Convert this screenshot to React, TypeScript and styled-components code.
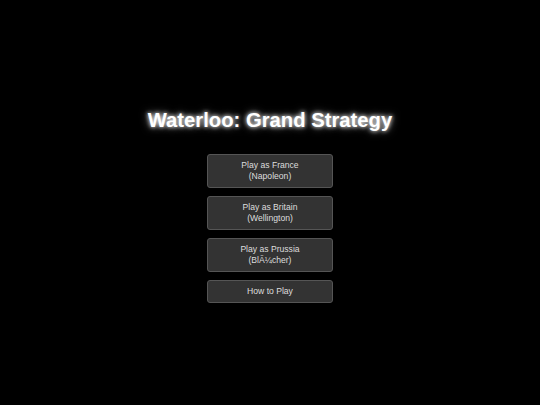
import React from "react";
import styled, { createGlobalStyle } from "styled-components";

const GlobalStyle = createGlobalStyle`
  html, body {
    margin: 0;
    padding: 0;
    background: #000;
  }
  body {
    font-family: "Liberation Sans", Arial, sans-serif;
  }
`;

const Screen = styled.div`
  box-sizing: border-box;
  width: 100vw;
  height: 100vh;
  padding-top: 6px;
  display: flex;
  flex-direction: column;
  align-items: center;
  justify-content: center;
  background: #000;
`;

const Title = styled.h1`
  margin: 0 0 22px 0;
  font-size: 20.25px;
  line-height: 23px;
  font-weight: bold;
  color: #fff;
  text-shadow: 0 0 4px #fff, 0 0 8px rgba(255, 255, 255, 0.6);
`;

const Menu = styled.div`
  display: flex;
  flex-direction: column;
  gap: 8px;
`;

const MenuButton = styled.button`
  box-sizing: border-box;
  width: 126px;
  padding: 5px 6px;
  background: #333;
  color: #ddd;
  border: 1px solid #555;
  border-radius: 3px;
  font-family: "Liberation Sans", Arial, sans-serif;
  font-size: 8.6px;
  line-height: 11px;
  cursor: pointer;
`;

const options = [
  ["Play as France", "(Napoleon)"],
  ["Play as Britain", "(Wellington)"],
  ["Play as Prussia", "(Bl\u00C3\u00BCcher)"],
];

export default function App() {
  return (
    <>
      <GlobalStyle />
      <Screen>
        <Title>Waterloo: Grand Strategy</Title>
        <Menu>
          {options.map(([a, b]) => (
            <MenuButton key={a}>
              {a}
              <br />
              {b}
            </MenuButton>
          ))}
          <MenuButton>How to Play</MenuButton>
        </Menu>
      </Screen>
    </>
  );
}
